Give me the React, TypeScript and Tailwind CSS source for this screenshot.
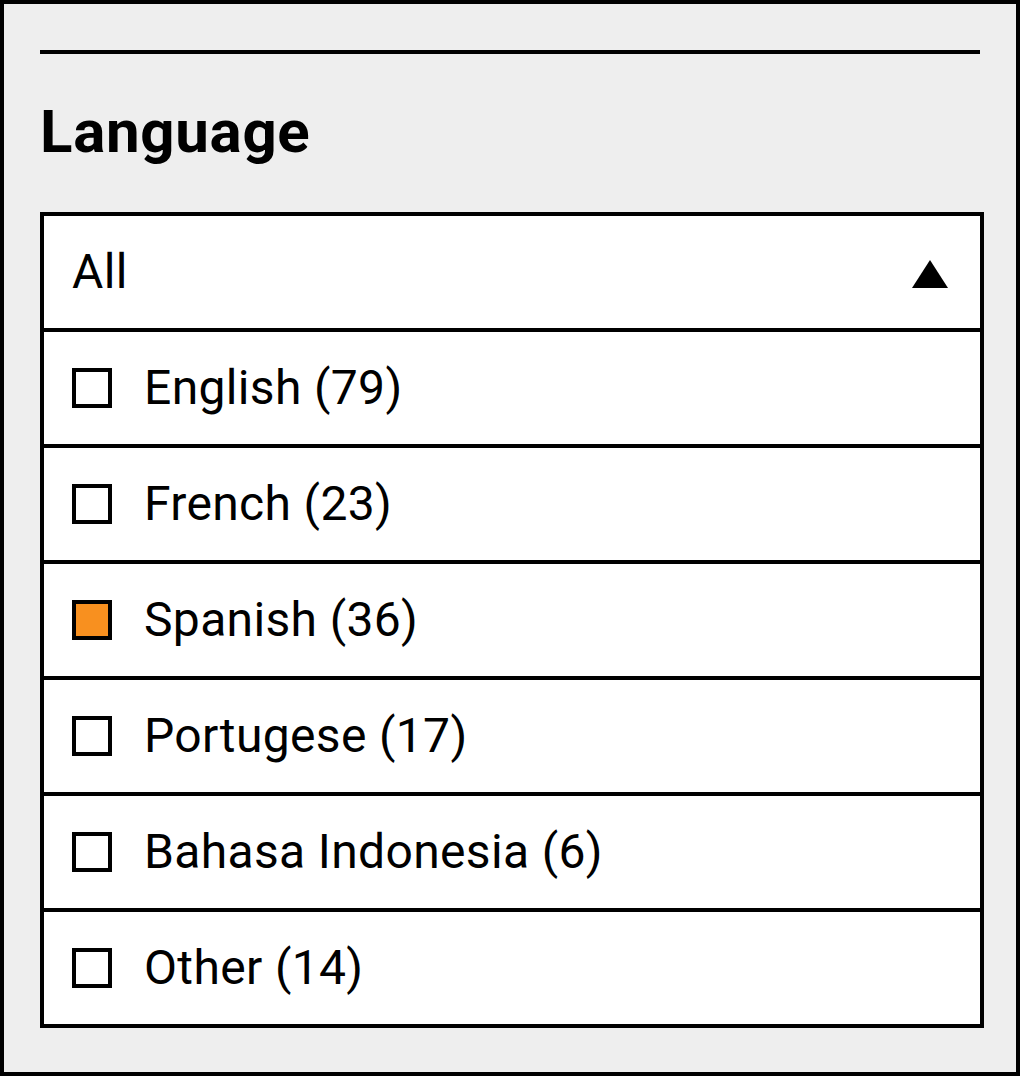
import React from "react";

const items = [
  { label: "English (79)", checked: false },
  { label: "French (23)", checked: false },
  { label: "Spanish (36)", checked: true },
  { label: "Portugese (17)", checked: false },
  { label: "Bahasa Indonesia (6)", checked: false },
  { label: "Other (14)", checked: false },
];

export default function App() {
  return (
    <div
      className="w-[1020px] h-[1076px] border-4 border-black bg-[#eeeeee] pl-9 pt-[46px] text-black"
      style={{ fontFamily: "Roboto, 'Noto Sans', sans-serif" }}
    >
      <div className="h-1 w-[940px] bg-black" />
      <h2 className="mt-[48px] mb-[50px] h-[60px] text-[60px] leading-[60px] font-bold tracking-[0.7px]">Language</h2>
      <div className="w-[944px] border-4 border-black bg-white">
        <div className="flex h-[112px] items-center justify-between pl-7 pr-8">
          <span className="text-[48px] leading-[48px] tracking-[0.35px]">All</span>
          <svg width="36" height="28" viewBox="0 0 36 28" className="mt-1">
            <polygon points="18,0 36,28 0,28" fill="#000" />
          </svg>
        </div>
        {items.map((it) => (
          <div key={it.label} className="flex h-[116px] items-center border-t-4 border-black pl-7">
            <div
              className={
                it.checked
                  ? "h-10 w-10 border-4 border-black bg-[#f8901f]"
                  : "h-10 w-10 border-4 border-black bg-white"
              }
            />
            <span className="ml-[32px] text-[48px] leading-[48px] tracking-[0.35px]">{it.label}</span>
          </div>
        ))}
      </div>
    </div>
  );
}
